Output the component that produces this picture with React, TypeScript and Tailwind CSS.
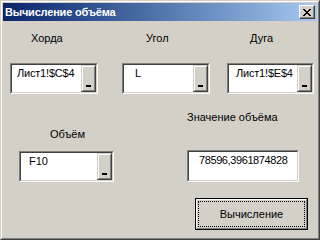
const FONT = "font-['Liberation_Sans',Arial,sans-serif] text-[11px] leading-[13px] text-black";

function DropButton() {
  return (
    <div className="w-[15px] h-full border border-t-[#d4d0c8] border-l-[#d4d0c8] border-b-[#404040] border-r-[#404040] bg-[#d4d0c8]">
      <div className="h-full flex items-end justify-center pb-[3px] border border-t-white border-l-white border-b-[#808080] border-r-[#808080]">
        <div className="w-[5px] h-[2px] bg-black" />
      </div>
    </div>
  );
}

function Field({ size, text, pad, dropdown = true }: { size: string; text: string; pad: string; dropdown?: boolean }) {
  return (
    <div className={`${size} border border-t-[#808080] border-l-[#808080] border-b-white border-r-white`}>
      <div className="flex h-full bg-white border border-t-[#404040] border-l-[#404040] border-b-[#d4d0c8] border-r-[#d4d0c8]">
        <div className={`flex-1 pt-[2px] whitespace-nowrap ${pad}`}>{text}</div>
        {dropdown && <DropButton />}
      </div>
    </div>
  );
}

export default function App() {
  return (
    <div className={`w-[320px] h-[240px] bg-[#d4d0c8] border border-t-[#d4d0c8] border-l-[#d4d0c8] border-b-[#404040] border-r-[#404040] ${FONT}`}>
      <div className="h-full p-[1px] border border-t-white border-l-white border-b-[#808080] border-r-[#808080]">
        {/* title bar */}
        <div className="h-[18px] flex items-center justify-between pl-[2px] pr-[2px] bg-linear-to-r from-[#0a246a] to-[#a6caf0]">
          <span className="text-white font-bold tracking-[-0.2px]">Вычисление объёма</span>
          <div className="w-[16px] h-[14px] bg-[#d4d0c8] border border-t-white border-l-white border-b-[#404040] border-r-[#404040]">
            <div className="h-full flex items-center justify-center border border-t-[#d4d0c8] border-l-[#d4d0c8] border-b-[#808080] border-r-[#808080]">
              <svg width="8" height="7" viewBox="0 0 8 7" shapeRendering="crispEdges">
                <path
                  fill="#000"
                  d="M0 0h2v1H0zM6 0h2v1H6zM1 1h2v1H1zM5 1h2v1H5zM2 2h4v1H2zM3 3h2v1H3zM2 4h4v1H2zM1 5h2v1H1zM5 5h2v1H5zM0 6h2v1H0zM6 6h2v1H6z"
                />
              </svg>
            </div>
          </div>
        </div>

        {/* row 1 */}
        <div className="flex pl-[7px] mt-[11px]">
          <div className="w-[88px]">
            <div className="pl-[21px]">Хорда</div>
            <div className="mt-[18px]">
              <Field size="w-[88px] h-[31px]" text="Лист1!$C$4" pad="pl-[5px] tracking-[-0.2px]" />
            </div>
          </div>
          <div className="w-[88px] ml-[24px]">
            <div className="pl-[24px]">Угол</div>
            <div className="mt-[18px]">
              <Field size="w-[88px] h-[31px]" text="L" pad="pl-[11px]" />
            </div>
          </div>
          <div className="w-[87px] ml-[17px]">
            <div className="pl-[23px]">Дуга</div>
            <div className="mt-[18px]">
              <Field size="w-[87px] h-[31px]" text="Лист1!$E$4" pad="pl-[7px] tracking-[-0.2px]" />
            </div>
          </div>
        </div>

        {/* row 2 */}
        <div className="flex items-start pl-[16px]">
          <div className="w-[95px] mt-[34px]">
            <div className="pl-[31px]">Объём</div>
            <div className="mt-[10px]">
              <Field size="w-[95px] h-[31px]" text="F10" pad="pl-[8px]" />
            </div>
          </div>
          <div className="w-[112px] ml-[73px] mt-[17px]">
            <div>Значение объёма</div>
            <div className="mt-[26px]">
              <Field size="w-[112px] h-[32px]" text="78596,3961874828" pad="pl-[10px] tracking-[-0.4px]" dropdown={false} />
            </div>
          </div>
        </div>

        {/* button */}
        <div className="flex justify-end pr-[9px] mt-[16px]">
          <div className="w-[113px] h-[32px] border border-black">
            <div className="h-full p-[1px] border border-t-white border-l-white border-b-[#808080] border-r-[#808080]">
              <div className="h-full flex items-center justify-center border border-dotted border-black">
                Вычисление
              </div>
            </div>
          </div>
        </div>
      </div>
    </div>
  );
}
